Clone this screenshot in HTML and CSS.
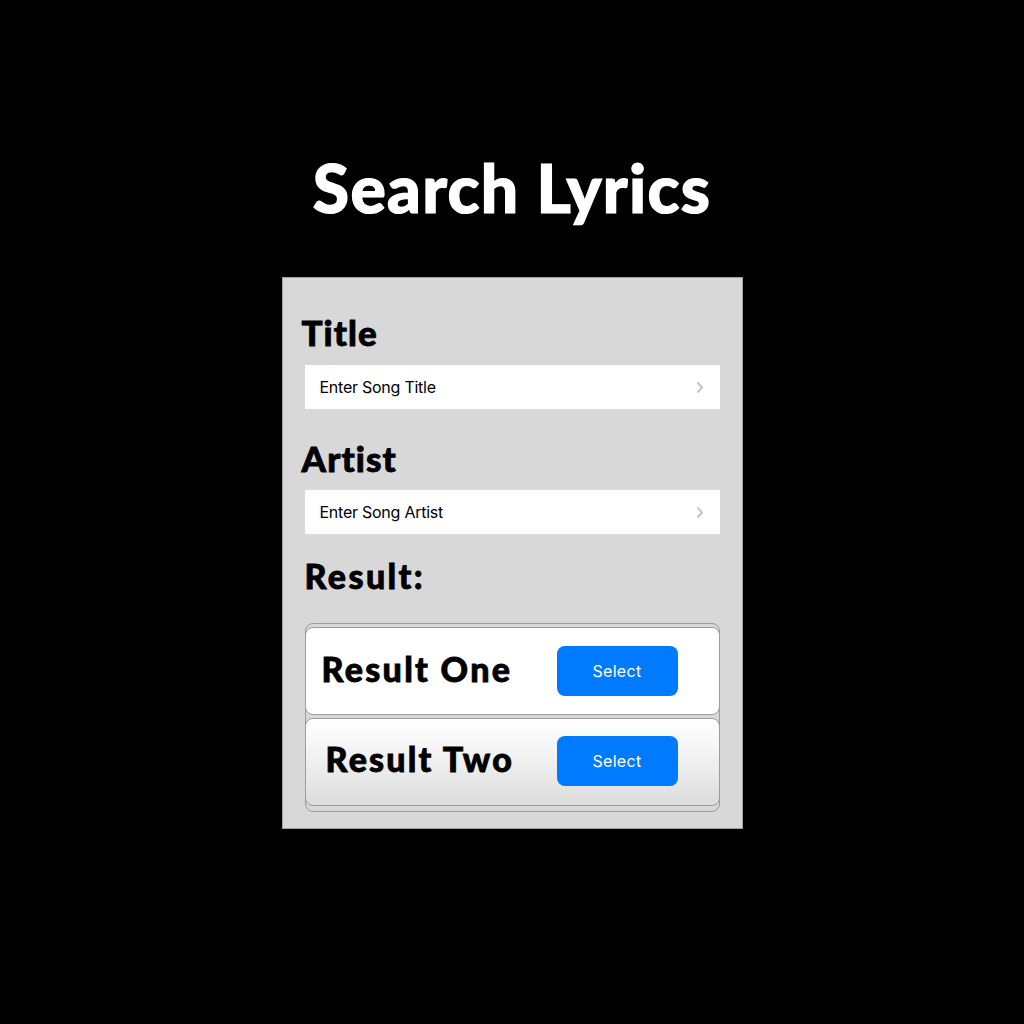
FILE: index.html
```html
<!DOCTYPE html>
<html>
<head>
<meta charset="utf-8">
<link rel="stylesheet" href="styles.css">
</head>
<body>
<main class="page">
  <h1 class="page-title">Search Lyrics</h1>
  <section class="panel">
    <h2 class="label label-title">Title</h2>
    <div class="field">
      <span class="field-text">Enter Song Title</span>
      <svg class="chev" width="8" height="13" viewBox="0 0 8 13"><path d="M1.5 1.5 L6 6.5 L1.5 11.5" fill="none" stroke="#c4c4c8" stroke-width="2"/></svg>
    </div>
    <h2 class="label label-artist">Artist</h2>
    <div class="field">
      <span class="field-text">Enter Song Artist</span>
      <svg class="chev" width="8" height="13" viewBox="0 0 8 13"><path d="M1.5 1.5 L6 6.5 L1.5 11.5" fill="none" stroke="#c4c4c8" stroke-width="2"/></svg>
    </div>
    <h2 class="label label-result">Result:</h2>
    <div class="results">
      <div class="card card-one">
        <span class="card-name">Result One</span>
        <button class="select">Select</button>
      </div>
      <div class="card card-two">
        <span class="card-name name-two">Result Two</span>
        <button class="select">Select</button>
      </div>
    </div>
  </section>
</main>
</body>
</html>
```
FILE: styles.css
```css
html, body {
  margin: 0;
  padding: 0;
  background: #000;
}
.page {
  width: 1024px;
  height: 1024px;
  display: flex;
  flex-direction: column;
  align-items: center;
  font-family: Lato, "Open Sans", sans-serif;
  font-variant-ligatures: none;
}
.page-title {
  margin: 148px 0 0 0;
  height: 129px;
  color: #fff;
  font-size: 66px;
  font-weight: 900;
  line-height: 80px;
  letter-spacing: 1.3px;
  -webkit-text-stroke: 1.2px #fff;
}
.panel {
  width: 459px;
  height: 550px;
  background: #d8d8d8;
  border: 1px solid #a0a0a0;
  box-sizing: content-box;
  padding: 0;
  display: flex;
  flex-direction: column;
}
.label {
  margin: 0;
  color: #000;
  font-weight: 900;
  font-size: 35px;
  line-height: 40px;
  letter-spacing: 1.1px;
  -webkit-text-stroke: 0.8px #000;
}
.label-title {
  margin: 34px 0 0 19px;
  height: 53px;
}
.label-artist {
  margin: 29px 0 0 19px;
  height: 52px;
}
.label-result {
  margin: 22px 0 0 22px;
  height: 67px;
  font-size: 34px;
  letter-spacing: 2.4px;
}
.field {
  margin-left: 22px;
  width: 415px;
  height: 44px;
  background: #fff;
  display: flex;
  align-items: center;
  justify-content: space-between;
  padding: 0 15px;
  box-sizing: border-box;
}
.field-text {
  font-family: Inter, Roboto, sans-serif;
  font-size: 16px;
  letter-spacing: -0.25px;
  color: #000;
}
.chev {
  margin-right: 1px;
}
.results {
  margin-left: 22px;
  width: 415px;
  height: 189px;
  box-sizing: border-box;
  border: 1px solid #9c9c9c;
  border-radius: 8px;
  padding: 3px 0 0 0;
  display: flex;
  flex-direction: column;
  gap: 3px;
}
.card {
  margin: 0 -1px;
  height: 88px;
  box-sizing: border-box;
  border: 1px solid #9c9c9c;
  border-radius: 8px;
  display: flex;
  align-items: center;
}
.card-one {
  background: #fff;
}
.card-two {
  background: linear-gradient(#ffffff, #f3f3f3 40%, #dcdcdc);
}
.card-name {
  margin-left: 16px;
  width: 235px;
  font-weight: 900;
  font-size: 34px;
  letter-spacing: 2.3px;
  -webkit-text-stroke: 0.8px #000;
  color: #000;
  margin-top: -6px;
}
.name-two {
  margin-left: 20px;
  width: 231px;
  letter-spacing: 2.2px;
  margin-top: -8px;
}
.select {
  width: 121px;
  height: 50px;
  border: none;
  border-radius: 8px;
  background: #007aff;
  color: #fff;
  font-family: Inter, Roboto, sans-serif;
  font-size: 16px;
  letter-spacing: 0.3px;
  margin-top: 0;
}
.card-two .select {
  margin-top: -2px;
}
```
